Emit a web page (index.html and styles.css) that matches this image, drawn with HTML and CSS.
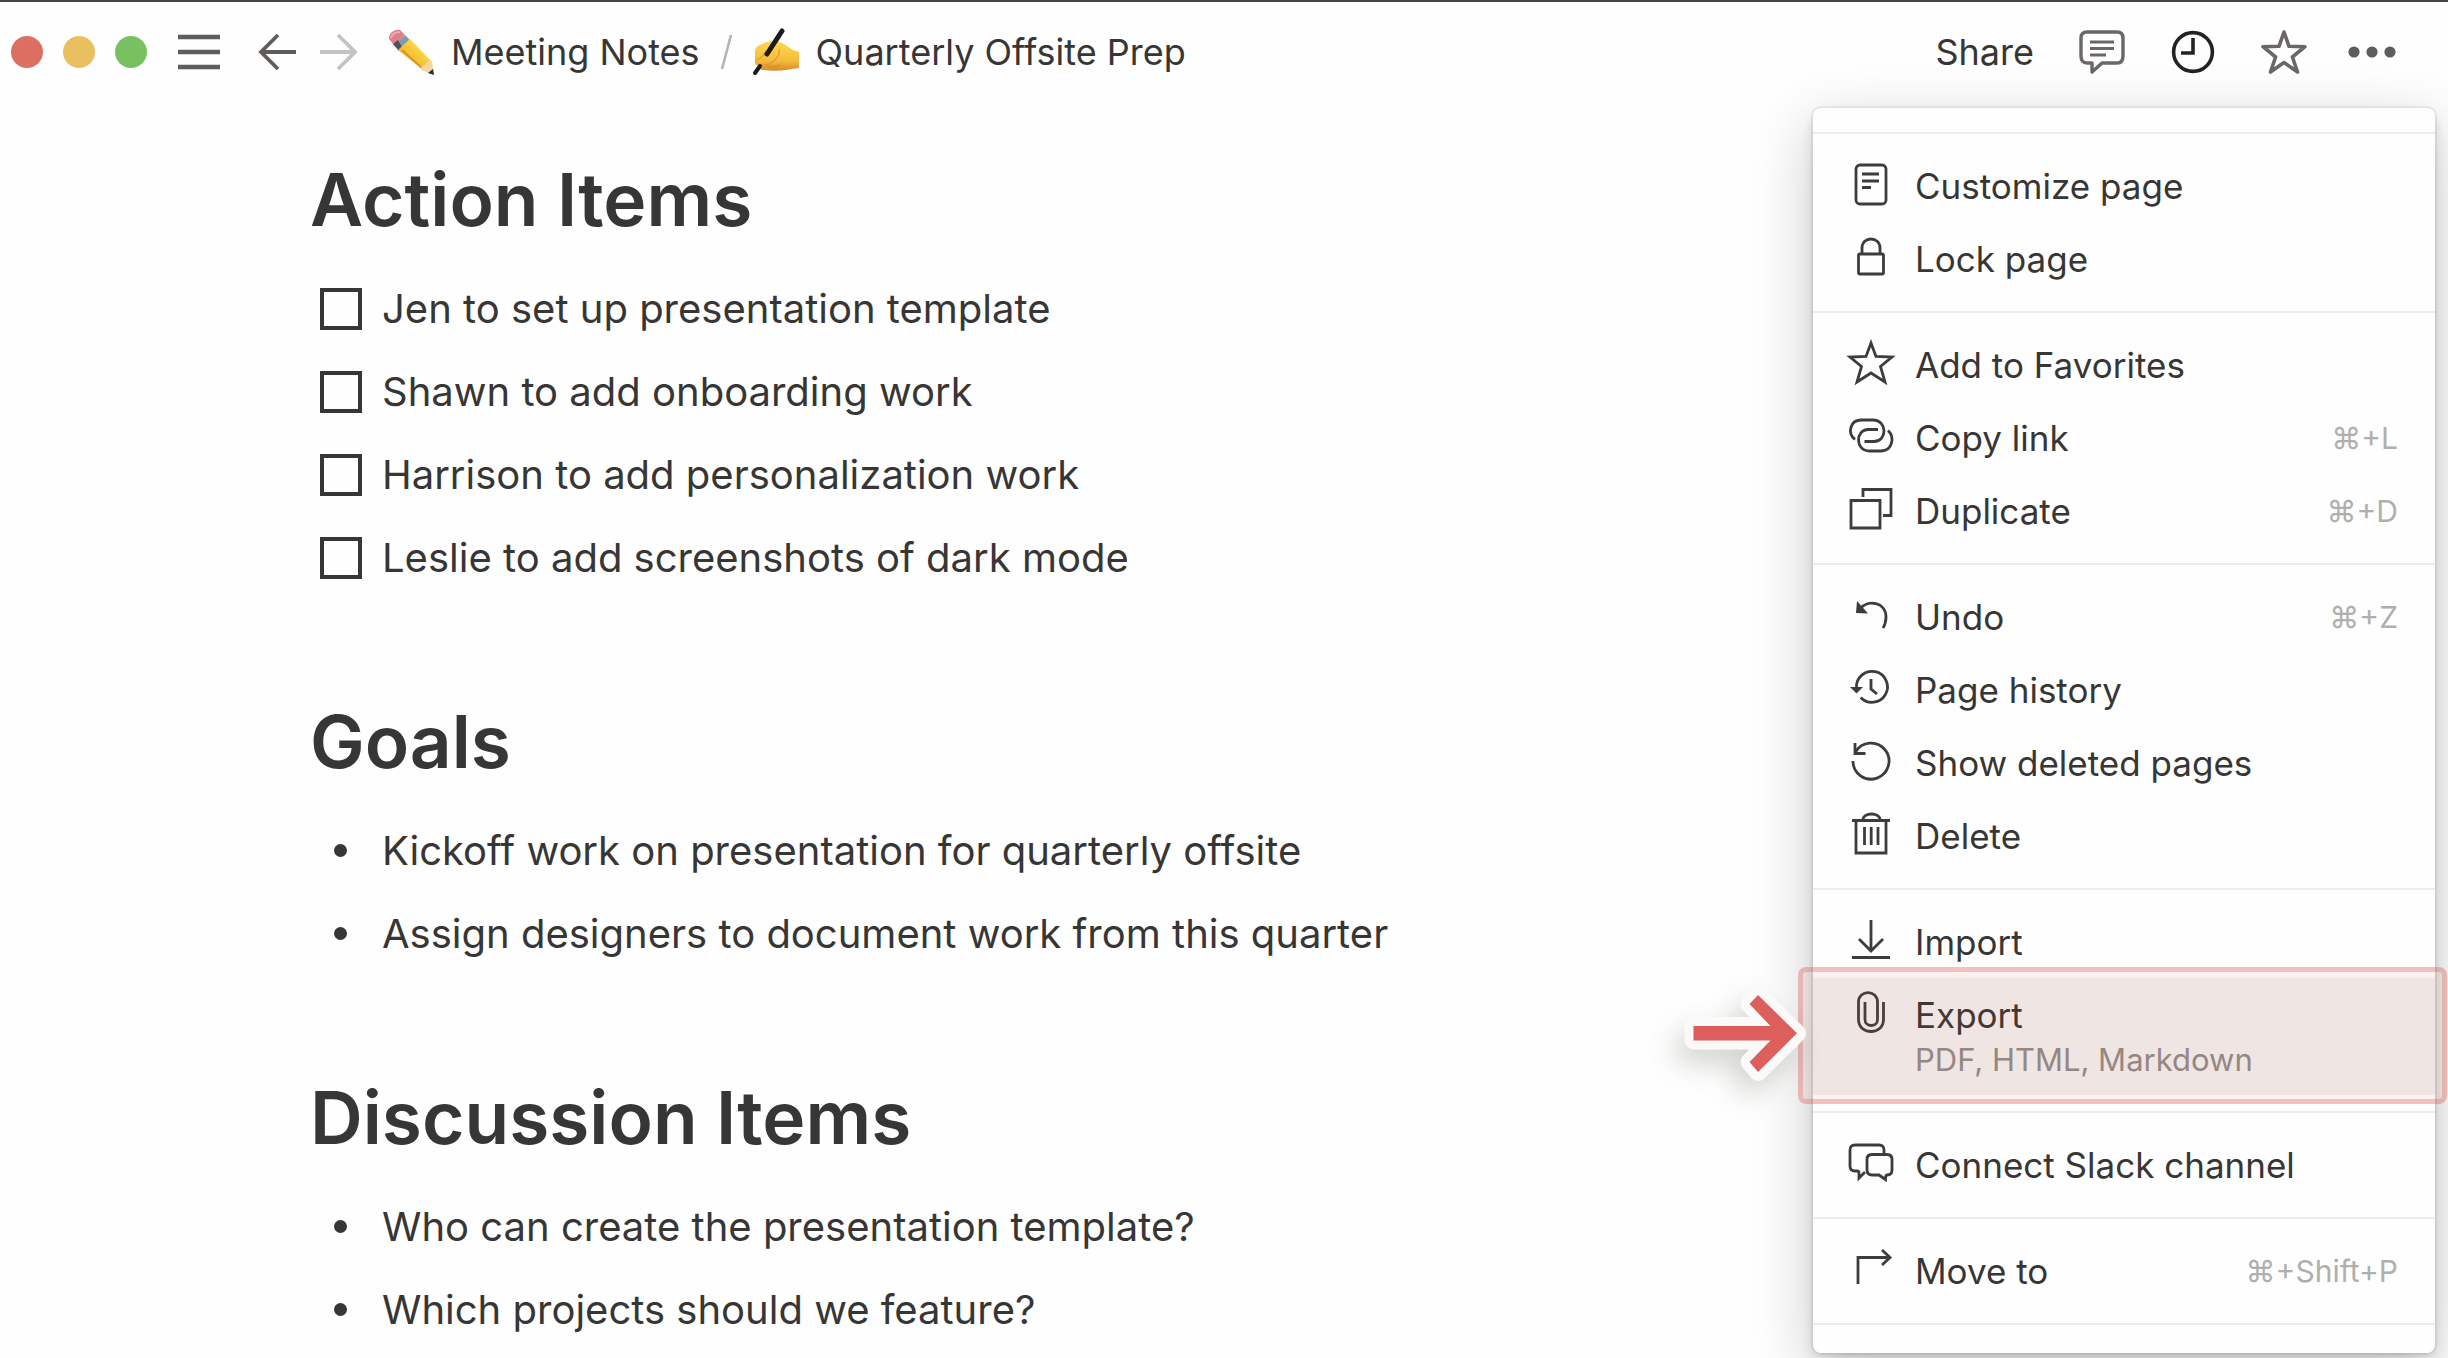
FILE: index.html
```html
<!DOCTYPE html>
<html lang="en">
<head>
<meta charset="utf-8">
<title>Quarterly Offsite Prep</title>
<link rel="stylesheet" href="styles.css">
</head>
<body>
<header class="topbar">
  <div class="lights">
    <span class="light light-red"></span>
    <span class="light light-yellow"></span>
    <span class="light light-green"></span>
  </div>
  <div class="nav">
    <button class="icon-btn nav-menu" aria-label="Menu">
      <svg width="42" height="42" viewBox="0 0 42 42"><path d="M0 6h42M0 21h42M0 36h42" stroke="#5f5c5a" stroke-width="4.4"/></svg>
    </button>
    <button class="icon-btn" aria-label="Back">
      <svg width="38" height="42" viewBox="0 0 38 42" fill="none" stroke="#5f5c5a" stroke-width="3.8"><path d="M38 21H3M20 4L3 21l17 17"/></svg>
    </button>
    <button class="icon-btn" aria-label="Forward">
      <svg width="38" height="42" viewBox="0 0 38 42" fill="none" stroke="#c4c3c2" stroke-width="3.8"><path d="M0 21h35M18 4l17 17-17 17"/></svg>
    </button>
  </div>
  <nav class="crumbs" aria-label="Breadcrumb">
    <a class="crumb" href="#">
      <svg class="emoji" width="48" height="48" viewBox="0 0 48 48">
        <defs>
          <linearGradient id="wood" x1="0" y1="1" x2="1" y2="0"><stop offset="0" stop-color="#d9982a"/><stop offset=".35" stop-color="#f2b92d"/><stop offset=".7" stop-color="#fbd94d"/><stop offset="1" stop-color="#e0a52f"/></linearGradient>
        </defs>
        <path d="M2 11C1 6 7 1 13 2l5 5L7 17z" fill="#e0808a"/>
        <path d="M4 10c1-4 5-6 9-6" stroke="#f2aab0" stroke-width="2" fill="none"/>
        <path d="M7 17L18 7l5 5-11 11z" fill="#7f9bb0"/>
        <path d="M6 16l5-4 4 7-3 4z" fill="#4c555e"/>
        <path d="M11 22L23 11l22 23-9 8z" fill="url(#wood)"/>
        <path d="M15 22l21 19" stroke="#cf8d20" stroke-width="1.5"/>
        <path d="M45 33l2 14-13-5c0-3 1-5 4-5 1-3 3-4 7-4z" fill="#f3d7a0"/>
        <path d="M46 41l1 6-6-2z" fill="#2d2d2d"/>
      </svg>
      <span>Meeting Notes</span>
    </a>
    <svg class="slash" width="12" height="36" viewBox="0 0 12 36"><path d="M11 1L2 35" stroke="#b5b4b3" stroke-width="2.6"/></svg>
    <a class="crumb" href="#">
      <svg class="emoji" width="48" height="48" viewBox="0 0 48 48">
        <defs>
          <linearGradient id="skin" x1="0" y1="0" x2="0" y2="1"><stop offset="0" stop-color="#ffd84f"/><stop offset=".65" stop-color="#f6bc3c"/><stop offset="1" stop-color="#d88a28"/></linearGradient>
        </defs>
        <path d="M3 24c0-4 2-6 5-7 5-3 9-4 14-4 8 0 14 6 19 9l6 2v16c-5 1-9 1-13 2-8 1-15 1-22 0-3 0-5-1-4-4-4 0-6-3-5-6z" fill="url(#skin)"/>
        <path d="M4 32c5-1 8-5 10-9M8 37c6 1 12-2 16-6 3-4 4-7 3-10" fill="none" stroke="#dc9c34" stroke-width="1.2"/>
        <path d="M14 38c4 1 10 1 14-1" fill="none" stroke="#d6922c" stroke-width="1.4"/>
        <path d="M30 3L15 26" stroke="#1b1b1d" stroke-width="5" stroke-linecap="round"/>
        <path d="M8 38L3 45" stroke="#1b1b1d" stroke-width="4" stroke-linecap="round"/>
      </svg>
      <span>Quarterly Offsite Prep</span>
    </a>
  </nav>
  <div class="actions">
    <button class="share">Share</button>
    <button class="icon-btn" aria-label="Comments">
      <svg width="46" height="46" viewBox="0 0 46 46" fill="none" stroke="#6a6766" stroke-width="3.4" stroke-linejoin="round"><path d="M8 3h30q6 0 6 6v18q0 7-6 7H23l-10 9v-9H8q-6 0-6-7V9q0-6 6-6z"/><path d="M11 13h24M11 19.500h24M11 26h16" stroke-width="2.800"/></svg>
    </button>
    <button class="icon-btn" aria-label="Updates">
      <svg width="46" height="46" viewBox="0 0 46 46" fill="none" stroke="#232323" stroke-width="3.6"><circle cx="23" cy="23" r="19.400"/><path d="M23 9v15H11"/></svg>
    </button>
    <button class="icon-btn" aria-label="Favorite">
      <svg width="46" height="46" viewBox="0 0 46 46" fill="none" stroke="#6a6766" stroke-width="3.6" stroke-linejoin="round"><path d="M23 3l5 14.300 16 .4-12.600 10.300L36.500 43 23 33.500 9.500 43l5.100-15L2 17.700l16-.4z"/></svg>
    </button>
    <button class="icon-btn more" aria-label="More">
      <svg width="48" height="46" viewBox="0 0 48 46" fill="#5f5c5a"><circle cx="6" cy="23" r="5.600"/><circle cx="24" cy="23" r="5.600"/><circle cx="42" cy="23" r="5.600"/></svg>
    </button>
  </div>
</header>

<main class="page">
  <section class="block">
    <h1>Action Items</h1>
    <ul class="list">
      <li><label class="line"><input class="check" type="checkbox"><span>Jen to set up presentation template</span></label></li>
      <li><label class="line"><input class="check" type="checkbox"><span>Shawn to add onboarding work</span></label></li>
      <li><label class="line"><input class="check" type="checkbox"><span>Harrison to add personalization work</span></label></li>
      <li><label class="line"><input class="check" type="checkbox"><span>Leslie to add screenshots of dark mode</span></label></li>
    </ul>
  </section>
  <section class="block">
    <h1>Goals</h1>
    <ul class="list">
      <li class="line bullet">Kickoff work on presentation for quarterly offsite</li>
      <li class="line bullet">Assign designers to document work from this quarter</li>
    </ul>
  </section>
  <section class="block">
    <h1>Discussion Items</h1>
    <ul class="list">
      <li class="line bullet">Who can create the presentation template?</li>
      <li class="line bullet">Which projects should we feature?</li>
    </ul>
  </section>
</main>

<aside class="menu" aria-label="Page menu">
  <div class="menu-edge"></div>
  <div class="group">
    <button class="item"><svg class="icon" viewBox="0 0 44 44"><rect x="7" y="2" width="30" height="39" rx="4"/><path d="M13 11h17M13 18h17M13 24.500h9"/></svg><span class="label">Customize page</span></button>
    <button class="item"><svg class="icon" viewBox="0 0 44 44"><rect x="9.500" y="18" width="25" height="20" rx="1.500"/><path d="M13 18v-6c0-12 18-12 18 0v6"/></svg><span class="label">Lock page</span></button>
  </div>
  <div class="group">
    <button class="item"><svg class="icon" viewBox="0 0 44 44"><path d="M22 1l5 13.500 16 .5-11.500 9.500L36 40l-14-9-14 9 4.500-15.500L1 15l16-.5z"/></svg><span class="label">Add to Favorites</span></button>
    <button class="item"><svg class="icon" viewBox="0 0 44 44"><path d="M6 24.500C-2 18 1 5 12.500 5H24c14.500 0 14.500 21.500 1 21.500h-9.500"/><path d="M39 15.500C46 22 43.500 36 32 36H20.500C6 36 6 14.500 19.500 14.500H29"/></svg><span class="label">Copy link</span><kbd>⌘+L</kbd></button>
    <button class="item"><svg class="icon" viewBox="0 0 44 44"><path d="M2 12.500h29v27.500H2zM14 9V1.500h28V27.500h-8"/></svg><span class="label">Duplicate</span><kbd>⌘+D</kbd></button>
  </div>
  <div class="group">
    <button class="item"><svg class="icon" viewBox="0 0 44 44"><path d="M11 15C19 5 37 8 37 23c0 4-1 8-3 11"/><path class="solid" d="M8 7l-1 12 12 .5z"/></svg><span class="label">Undo</span><kbd>⌘+Z</kbd></button>
    <button class="item"><svg class="icon" viewBox="0 0 44 44"><path d="M7.500 21A15.500 15.500 0 1 1 11.700 30.500M22 12v10l6 5"/><path class="solid" d="M1 20h13l-6.500 6.500z"/></svg><span class="label">Page history</span></button>
    <button class="item"><svg class="icon" viewBox="0 0 44 44"><path d="M4 21A18 18 0 1 0 6.500 12M6 3v10.500h10.500"/></svg><span class="label">Show deleted pages</span></button>
    <button class="item"><svg class="icon" viewBox="0 0 44 44"><path d="M3 7.500h38M7 7.500V40h30V7.500M14 7c0-8 17-8 17 0M15.500 14v18M22.200 14v18M29 14v18"/></svg><span class="label">Delete</span></button>
  </div>
  <div class="group">
    <button class="item"><svg class="icon" viewBox="0 0 44 44"><path d="M22 1v31M10 20l12 12 12-12"/><path d="M3 38.500h38" stroke-width="3.200"/></svg><span class="label">Import</span></button>
    <button class="item item-active"><svg class="icon" viewBox="0 0 44 44"><path d="M34.500 10v17.500c0 16-25 16-25 0V10c0-12.500 19-12.500 19 0v17.500c0 8-12.500 8-12.500 0V10"/></svg><span class="label">Export<small>PDF, HTML, Markdown</small></span></button>
  </div>
  <div class="group">
    <button class="item"><svg class="icon" viewBox="0 0 44 44"><path d="M35 12V8q0-5-5-5H6Q1 3 1 8v16q0 5 5 5h2q2 0 2 2v5l6-6"/><path d="M23 12.500h15q5 0 5 5V28q0 5-5 5-1.500 0-1.500 4.500L30 33h-7q-5 0-5-5V17.500q0-5 5-5z"/></svg><span class="label">Connect Slack channel</span></button>
  </div>
  <div class="group">
    <button class="item"><svg class="icon" viewBox="0 0 44 44"><path d="M9 36V9.500h31M33 2l8 7.500-8 7.500"/></svg><span class="label">Move to</span><kbd>⌘+Shift+P</kbd></button>
  </div>
  <div class="menu-end"></div>
  <div class="callout">
    <svg class="pointer" width="140" height="108" viewBox="0 0 140 108">
      <path id="arrow" d="M17.500 45H94.500L73.500 23 82 14l39 38.300L82 91l-8.500-10 21-21.500H17.500z" fill="#fbfaf9" stroke="#fbfaf9" stroke-width="18" stroke-linejoin="round"/>
      <path d="M17.500 45H94.500L73.500 23 82 14l39 38.300L82 91l-8.500-10 21-21.500H17.500z" fill="#dc5f5b"/>
    </svg>
  </div>
</aside>
</body>
</html>
```
FILE: styles.css
```css
* {
  box-sizing: border-box;
}

body {
  margin: 0;
  min-height: 100vh;
  position: relative;
  overflow: hidden;
  border-top: 2px solid #474444;
  background: #fefefe;
  color: #373635;
  font-family: Inter, "Liberation Sans", sans-serif;
}

button {
  margin: 0;
  padding: 0;
  border: 0;
  background: none;
  color: inherit;
  font: inherit;
  text-align: left;
}

a {
  color: inherit;
  text-decoration: none;
}

svg {
  display: block;
  flex: none;
}

/* Top bar */

.topbar {
  display: flex;
  align-items: center;
  height: 99px;
  padding: 0 52px 0 11px;
  font-size: 36px;
}

.lights {
  display: flex;
  gap: 20px;
}

.light {
  width: 32px;
  height: 32px;
  border-radius: 50%;
}

.light-red { background: #dc6e62; }
.light-yellow { background: #eabf60; }
.light-green { background: #77c160; }

.nav {
  display: flex;
  gap: 24px;
  margin-left: 31px;
}

.nav-menu {
  margin-right: 14px;
}

.crumbs {
  display: flex;
  align-items: center;
  gap: 20px;
  margin-left: 29px;
}

.crumb {
  display: flex;
  align-items: center;
  gap: 16px;
}

.actions {
  display: flex;
  align-items: center;
  gap: 45px;
  margin-left: auto;
}

.more {
  margin-left: -4px;
}

/* Document */

.page {
  display: flex;
  flex-direction: column;
  gap: 97px;
  padding: 53px 0 0 310px;
}

h1 {
  margin: 0 0 21px;
  font-size: 73px;
  line-height: 92px;
  font-weight: 600;
}

.list {
  margin: 0;
  padding: 0;
  list-style: none;
  font-size: 40px;
}

.line {
  display: flex;
  align-items: center;
  height: 83px;
  padding-left: 10px;
}

.check {
  appearance: none;
  width: 42px;
  height: 42px;
  margin: 0 20px 0 0;
  border: 4px solid #373635;
}

.bullet::before {
  content: "";
  width: 13px;
  height: 13px;
  margin: 0 35px 0 14px;
  border-radius: 50%;
  background: #373635;
}

/* Page menu */

.menu {
  position: absolute;
  top: 106px;
  right: 13px;
  width: 622px;
  border-radius: 8px;
  background: #fefefe;
  box-shadow: 0 0 0 2px rgba(15, 15, 15, 0.06), 0 6px 12px rgba(15, 15, 15, 0.12), 0 18px 60px rgba(15, 15, 15, 0.22);
  font-size: 35px;
}

.menu-edge {
  height: 24px;
}

.menu-end {
  height: 30px;
  border-top: 2px solid #ececec;
}

.group {
  padding: 15px 0 16px;
  border-top: 2px solid #ececec;
}

.item {
  display: flex;
  align-items: flex-start;
  gap: 22px;
  width: 100%;
  min-height: 73px;
  padding: 14px 37px 13px 36px;
  line-height: 46px;
}

.icon {
  width: 44px;
  height: 44px;
  overflow: visible;
  fill: none;
  stroke: #3d3c3b;
  stroke-width: 2.8;
}

.icon .solid {
  fill: #3d3c3b;
  stroke: none;
}

.label {
  flex: 1;
}

kbd {
  color: #b0afae;
  font-family: inherit;
  font-size: 30px;
}

.item-active {
  min-height: 117px;
  background: #f1f1f0;
}

small {
  display: block;
  color: #8f8b8a;
  font-size: 31px;
  line-height: 44px;
}

.callout {
  position: absolute;
  top: 859px;
  right: -12px;
  left: -15px;
  height: 137px;
  border: 5px solid rgba(222, 90, 90, 0.32);
  border-radius: 8px;
  background: rgba(222, 90, 70, 0.08);
}

.pointer {
  position: absolute;
  top: 9px;
  right: 100%;
  margin-right: -13px;
  filter: drop-shadow(-8px 14px 14px rgba(60, 60, 40, 0.22));
}
```
